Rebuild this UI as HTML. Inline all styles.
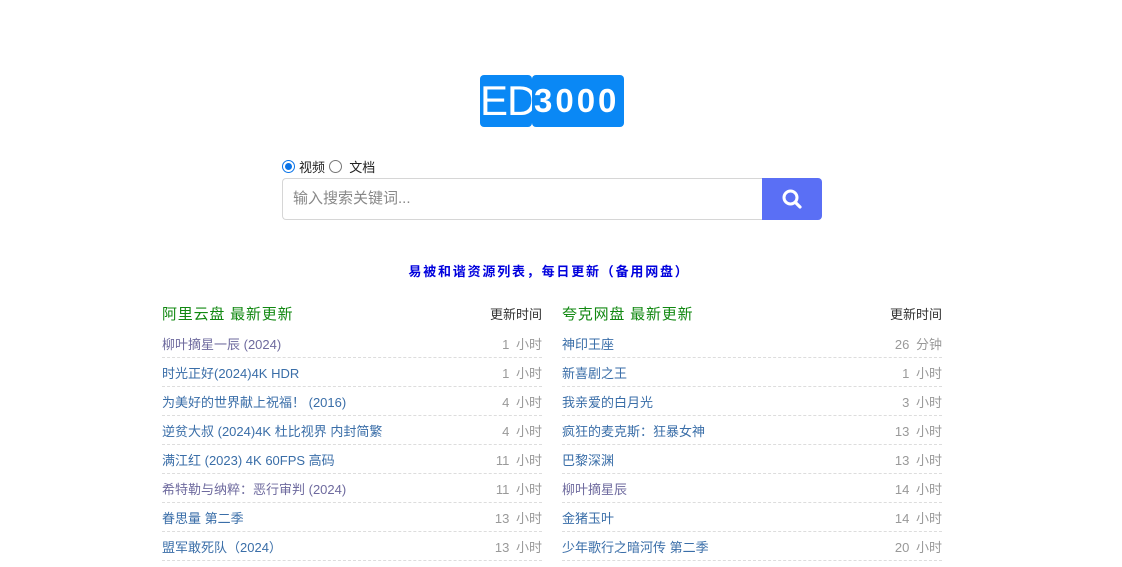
<!DOCTYPE html>
<html><head><meta charset="utf-8"><style>
*{margin:0;padding:0;box-sizing:border-box}
body{width:1122px;height:567px;overflow:hidden;background:#fff;font-family:"Liberation Sans","Noto Sans CJK SC",sans-serif;font-size:13px;color:#333}
.logo{position:absolute;top:75px;left:480px;height:52px;display:flex}
.logo div{background:#0a88f5;color:#fff;border-radius:4px;height:52px;line-height:52px}
.l1{width:52px;font-size:42px;text-align:center;letter-spacing:-1px;font-weight:300}
.l2{width:92px;font-size:33px;font-weight:bold;letter-spacing:3px;padding-left:2px}
.radios{position:absolute;top:157px;left:282px;font-size:13px;color:#222;display:flex;align-items:center}
.rb{display:inline-block;width:13px;height:13px;border-radius:50%;border:1px solid #777;margin-right:4px;position:relative}
.rb.on{border-color:#0a74e8}
.rb.on:after{content:"";position:absolute;left:2px;top:2px;width:7px;height:7px;border-radius:50%;background:#0a74e8}
.search{position:absolute;top:178px;left:282px;width:540px;height:42px;display:flex}
.inp{flex:1;border:1px solid #d6d6d6;border-right:none;border-radius:4px 0 0 4px;padding-left:10px;line-height:40px;color:#888;font-size:15px}
.btn{width:60px;background:#5a6ff5;border-radius:0 4px 4px 0;display:flex;align-items:center;justify-content:center}
.head{position:absolute;top:261px;left:0;width:1098px;text-align:center;color:#0000dd;font-weight:bold;font-size:13px;letter-spacing:1.8px}
.col{position:absolute;top:303px;width:380px}
.ch{display:flex;justify-content:space-between;height:20px;align-items:center;margin-bottom:6px}
.ch b{font-weight:normal;color:#118811;font-size:15px;letter-spacing:0.8px}
.ch span{font-size:13px;color:#333}
.row{height:29px;border-bottom:1px dashed #ddd;display:flex;justify-content:space-between;align-items:center;padding-top:1px}
.row a{color:#3a6ea8;text-decoration:none;font-size:13px}
.row a.v{color:#6e6a9e}
.row span{color:#999;font-size:13px;word-spacing:3px}
</style></head><body>
<div class="logo"><div class="l1">ED</div><div class="l2">3000</div></div>
<div class="radios"><span class="rb on"></span>视频&nbsp;<span class="rb"></span>&nbsp;文档</div>
<div class="search"><div class="inp">输入搜索关键词...</div><div class="btn"><svg width="22" height="22" viewBox="0 0 22 22"><circle cx="9.5" cy="9.5" r="6.5" fill="none" stroke="#fff" stroke-width="3"/><path d="M14.5 14.5L19 19" stroke="#fff" stroke-width="3.2" stroke-linecap="round"/></svg></div></div>
<div class="head">易被和谐资源列表，每日更新（备用网盘）</div>
<div class="col" style="left:162px">
<div class="ch"><b>阿里云盘 最新更新</b><span>更新时间</span></div>
<div class="row"><a class="v">柳叶摘星一辰 (2024)</a><span>1 小时</span></div>
<div class="row"><a>时光正好(2024)4K HDR</a><span>1 小时</span></div>
<div class="row"><a>为美好的世界献上祝福！ (2016)</a><span>4 小时</span></div>
<div class="row"><a>逆贫大叔 (2024)4K 杜比视界 内封简繁</a><span>4 小时</span></div>
<div class="row"><a>满江红 (2023) 4K 60FPS 高码</a><span>11 小时</span></div>
<div class="row"><a class="v">希特勒与纳粹：恶行审判 (2024)</a><span>11 小时</span></div>
<div class="row"><a>眷思量 第二季</a><span>13 小时</span></div>
<div class="row"><a>盟军敢死队（2024）</a><span>13 小时</span></div>
</div>
<div class="col" style="left:562px">
<div class="ch"><b>夸克网盘 最新更新</b><span>更新时间</span></div>
<div class="row"><a>神印王座</a><span>26 分钟</span></div>
<div class="row"><a>新喜剧之王</a><span>1 小时</span></div>
<div class="row"><a>我亲爱的白月光</a><span>3 小时</span></div>
<div class="row"><a>疯狂的麦克斯：狂暴女神</a><span>13 小时</span></div>
<div class="row"><a>巴黎深渊</a><span>13 小时</span></div>
<div class="row"><a class="v">柳叶摘星辰</a><span>14 小时</span></div>
<div class="row"><a>金猪玉叶</a><span>14 小时</span></div>
<div class="row"><a>少年歌行之暗河传 第二季</a><span>20 小时</span></div>
</div>
</body></html>
